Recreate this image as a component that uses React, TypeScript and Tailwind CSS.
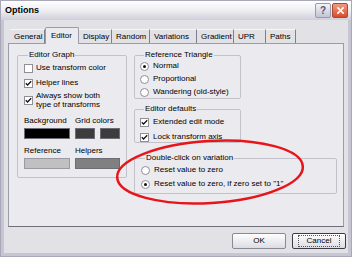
import React from "react";

const TABS = [
  { label: "General", w: "w-[35px]" },
  { label: "Editor", w: "w-[34px]", active: true },
  { label: "Display", w: "w-[33px]" },
  { label: "Random", w: "w-[38px]" },
  { label: "Variations", w: "w-[47px]" },
  { label: "Gradient", w: "w-[37px]" },
  { label: "UPR", w: "w-[32px]" },
  { label: "Paths", w: "w-[30px]" },
];

function Check({ checked }: { checked?: boolean }) {
  return (
    <span className="flex h-[9px] w-[9px] shrink-0 items-center justify-center border border-[#8f8f96] bg-white">
      {checked && (
        <svg viewBox="0 0 9 9" className="h-[7px] w-[7px]" aria-hidden>
          <path d="M1 4.2 L3.3 6.5 L8 1.6" fill="none" stroke="#111" strokeWidth="1.6" />
        </svg>
      )}
    </span>
  );
}

function Radio({ checked }: { checked?: boolean }) {
  return (
    <span className="flex h-[9px] w-[9px] shrink-0 items-center justify-center rounded-full border border-[#8f8f96] bg-white">
      {checked && <span className="h-[3px] w-[3px] rounded-full bg-[#111]" />}
    </span>
  );
}

function Group({ title, className, children }: { title: string; className?: string; children: React.ReactNode }) {
  return (
    <fieldset className={`rounded-[2px] border border-[#c3c2cb] ${className ?? ""}`}>
      <legend className="ml-[4px] px-[1px] leading-[10px]">{title}</legend>
      {children}
    </fieldset>
  );
}

export default function App() {
  return (
    <div
      className="relative h-[257px] w-[352px] overflow-hidden bg-[#a9a8b8] p-[1px] text-[8px] text-black"
      style={{ fontFamily: '"Liberation Sans", Arial, sans-serif' }}
    >
      <div className="flex h-full flex-col border-x-[3px] border-b-[3px] border-[#c6c5d2] bg-[#e2e1e6]">
        {/* title bar */}
        <div className="-mx-[3px] flex h-[19px] items-center bg-gradient-to-b from-[#ffffff] via-[#eeeef2] to-[#cfcfd9] pl-[4px] pr-[3px]">
          <span className="flex-1 text-[9px] font-bold leading-none">Options</span>
          <span className="mr-[1px] flex h-[15px] w-[16px] items-center justify-center rounded-[2px] border border-[#9a9aae] bg-gradient-to-b from-[#f4f4f8] to-[#c3c4d3] text-[10px] font-bold text-[#56567a]">
            ?
          </span>
          <span className="flex h-[15px] w-[16px] items-center justify-center rounded-[2px] border border-[#a84a3a] bg-gradient-to-b from-[#f09a80] to-[#d84a2c]">
            <svg viewBox="0 0 10 10" className="h-[9px] w-[9px]" aria-hidden>
              <path d="M1.5 1.5 L8.5 8.5 M8.5 1.5 L1.5 8.5" stroke="#fff" strokeWidth="1.8" />
            </svg>
          </span>
        </div>

        {/* tabs */}
        <div className="mt-[6px] flex h-[17px] items-end pl-[6px]">
          {TABS.map((t) =>
            t.active ? (
              <div
                key={t.label}
                className={`${t.w} relative z-10 -mb-[1px] flex h-[17px] items-center rounded-t-[2px] border-x border-t border-[#9c9ba8] bg-[#ebeaee] pl-[5px] leading-none`}
              >
                {t.label}
              </div>
            ) : (
              <div
                key={t.label}
                className={`${t.w} flex h-[14px] items-center border-r border-[#7f7e8a] border-t border-t-[#f6f6f8] pl-[4px] leading-none`}
              >
                {t.label}
              </div>
            )
          )}
        </div>

        {/* tab panel */}
        <div className="mx-[4px] flex h-[184px] gap-[7px] border border-[#9c9ba8] border-b-[#6f6e7a] bg-[#ebeaee] pl-[8px] pt-[6px]">
          <Group title="Editor Graph" className="h-[128px] w-[108px] px-[6px]">
            <div className="mt-[3px] flex items-center gap-[3px] leading-[10px]">
              <Check />
              <span>Use transform color</span>
            </div>
            <div className="mt-[5px] flex items-center gap-[3px] leading-[10px]">
              <Check checked />
              <span>Helper lines</span>
            </div>
            <div className="mt-[3px] flex items-center gap-[3px] leading-[9px]">
              <Check checked />
              <span>
                Always show both
                <br />
                type of transforms
              </span>
            </div>
            <div className="mt-[7px] flex leading-[10px]">
              <span className="w-[51px]">Background</span>
              <span>Grid colors</span>
            </div>
            <div className="mt-[2px] flex gap-[5px]">
              <span className="h-[11px] w-[46px] border border-[#6d6d78] bg-black" />
              <span className="h-[11px] w-[20px] border border-[#6d6d78] bg-[#3c3c3c]" />
              <span className="h-[11px] w-[20px] border border-[#6d6d78] bg-[#3c3c3c]" />
            </div>
            <div className="mt-[7px] flex leading-[10px]">
              <span className="w-[51px]">Reference</span>
              <span>Helpers</span>
            </div>
            <div className="mt-[2px] flex gap-[5px]">
              <span className="h-[11px] w-[46px] border border-[#9a9aa2] bg-[#c0c0c0]" />
              <span className="h-[11px] w-[45px] border border-[#6d6d78] bg-[#808080]" />
            </div>
          </Group>

          <div className="flex flex-col">
            <Group title="Reference Triangle" className="h-[49px] w-[107px] px-[5px]">
              <div className="mt-[1px] flex flex-col gap-[3px] leading-[10px]">
                <div className="flex items-center gap-[4px]">
                  <Radio checked />
                  <span>Normal</span>
                </div>
                <div className="flex items-center gap-[4px]">
                  <Radio />
                  <span>Proportional</span>
                </div>
                <div className="flex items-center gap-[4px]">
                  <Radio />
                  <span>Wandering (old-style)</span>
                </div>
              </div>
            </Group>
            <Group title="Editor defaults" className="mt-[5px] h-[39px] w-[107px] px-[5px]">
              <div className="mt-[3px] flex flex-col gap-[5px] leading-[10px]">
                <div className="flex items-center gap-[4px]">
                  <Check checked />
                  <span>Extended edit mode</span>
                </div>
                <div className="flex items-center gap-[4px]">
                  <Check checked />
                  <span>Lock transform axis</span>
                </div>
              </div>
            </Group>
            <Group title="Double-click on variation" className="mt-[10px] h-[41px] w-[203px] px-[6px]">
              <div className="mt-[2px] flex flex-col gap-[4px] leading-[10px]">
                <div className="flex items-center gap-[4px]">
                  <Radio />
                  <span>Reset value to zero</span>
                </div>
                <div className="flex items-center gap-[4px]">
                  <Radio checked />
                  <span>Reset value to zero, if zero set to "1"</span>
                </div>
              </div>
            </Group>
          </div>
        </div>

        {/* buttons */}
        <div className="mt-[6px] flex justify-end gap-[6px] pr-[2px]">
          <button className="h-[16px] w-[54px] rounded-[2px] border border-[#8a8996] bg-gradient-to-b from-[#ffffff] to-[#dcdce3] leading-none">
            OK
          </button>
          <button className="flex h-[16px] w-[54px] items-center justify-center rounded-[2px] border border-[#3c3c48] bg-gradient-to-b from-[#ffffff] to-[#dcdce3] leading-none">
            <span className="border border-dotted border-[#555] px-[8px] py-[1px]">Cancel</span>
          </button>
        </div>
      </div>

      {/* hand-drawn annotation */}
      <svg className="pointer-events-none absolute inset-0" width="352" height="257" aria-hidden>
        <ellipse cx="210" cy="172" rx="93" ry="31" fill="none" stroke="#e8141c" strokeWidth="2.5" transform="rotate(-3.5 210 172)" />
      </svg>
    </div>
  );
}
